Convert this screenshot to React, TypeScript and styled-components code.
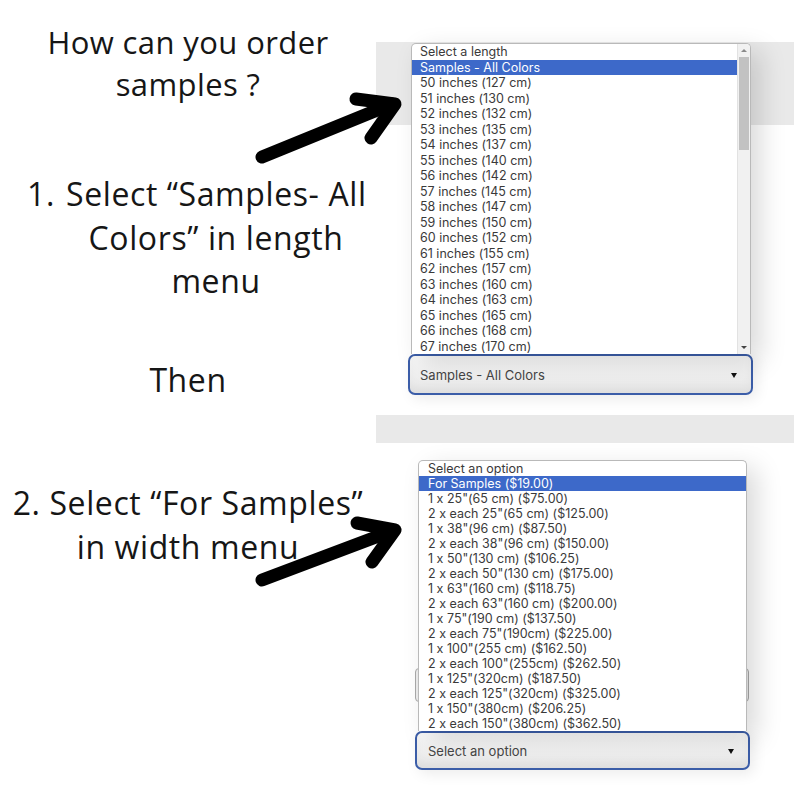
import styled, { createGlobalStyle } from "styled-components";

const GlobalStyle = createGlobalStyle`
  html, body {
    margin: 0;
    padding: 0;
    background: #ffffff;
  }
`;

const lengthOptions = [
  "Select a length",
  "Samples - All Colors",
  ...[127, 130, 132, 135, 137, 140, 142, 145, 147, 150, 152, 155, 157, 160, 163, 165, 168, 170].map(
    (cm, i) => `${50 + i} inches (${cm} cm)`
  ),
];

const widthOptions = [
  "Select an option",
  "For Samples ($19.00)",
  '1 x 25"(65 cm) ($75.00)',
  '2 x each 25"(65 cm) ($125.00)',
  '1 x 38"(96 cm) ($87.50)',
  '2 x each 38"(96 cm) ($150.00)',
  '1 x 50"(130 cm) ($106.25)',
  '2 x each 50"(130 cm) ($175.00)',
  '1 x 63"(160 cm) ($118.75)',
  '2 x each 63"(160 cm) ($200.00)',
  '1 x 75"(190 cm) ($137.50)',
  '2 x each 75"(190cm) ($225.00)',
  '1 x 100"(255 cm) ($162.50)',
  '2 x each 100"(255cm) ($262.50)',
  '1 x 125"(320cm) ($187.50)',
  '2 x each 125"(320cm) ($325.00)',
  '1 x 150"(380cm) ($206.25)',
  '2 x each 150"(380cm) ($362.50)',
];

export default function App() {
  return (
    <>
      <GlobalStyle />
      <Page>
        <Instructions>
          <Heading>
            How can you order
            <br />
            samples ?
          </Heading>

          {/* step 1 : marker + centred text block */}
          <StepOne>
            <Marker>1.</Marker>
            <StepText>
              Select “Samples- All
              <br />
              Colors” in length
              <br />
              menu
            </StepText>
          </StepOne>

          <Then>Then</Then>

          <StepTwo>
            2. Select “For Samples”
            <br />
            in width menu
          </StepTwo>
        </Instructions>

        <Shop>
          <Band $height={83} />
          <SelectWrap $top={229} $left={32} $width={345}>
            <ListBox $width={340}>
              <Options>
                {lengthOptions.map((o, i) => (
                  <Option key={o} $h={15.5} $active={i === 1}>
                    {o}
                  </Option>
                ))}
              </Options>
              <Scrollbar>
                <ScrollArrow $up />
                <Thumb />
                <Track />
                <ScrollArrow />
              </Scrollbar>
            </ListBox>
            <Select $height={41}>
              Samples - All Colors
              <Caret />
            </Select>
          </SelectWrap>

          <Band $height={28} $top={20} />

          <HiddenField />
          <SelectWrap $top={29} $left={39} $width={335}>
            <ListBox $width={329}>
              <Options>
                {widthOptions.map((o, i) => (
                  <Option key={o} $h={15} $active={i === 1} $pad={9}>
                    {o}
                  </Option>
                ))}
              </Options>
            </ListBox>
            <Select $height={39} $pad={11}>
              Select an option
              <Caret />
            </Select>
          </SelectWrap>
        </Shop>

        <Arrows viewBox="0 0 794 794">
          <path d="M262 157 L392 104" />
          <path d="M356 99 L395 104 L371 138" />
          <path d="M262 580 L392 531" />
          <path d="M357 523 L395 530 L372 562" />
        </Arrows>
      </Page>
    </>
  );
}

const Page = styled.div`
  position: relative;
  width: 794px;
  height: 794px;
  overflow: hidden;
  display: grid;
  grid-template-columns: 376px 1fr;
  background: #fff;
`;

const Instructions = styled.div`
  display: flex;
  flex-direction: column;
  font-family: "Open Sans", "Liberation Sans", sans-serif;
  font-size: 32px;
  letter-spacing: 0.6px;
  color: #161616;
  text-align: center;
`;

const Heading = styled.div`
  margin-top: 21px;
  font-size: 31px;
  letter-spacing: 0.4px;
  line-height: 42px;
`;

const StepOne = styled.div`
  display: flex;
  margin-top: 67px;
  line-height: 43.5px;
`;

const Marker = styled.span`
  width: 66px;
  padding-left: 27px;
  box-sizing: border-box;
  text-align: left;
`;

const StepText = styled.div`
  width: 300px;
  text-align: center;
  white-space: nowrap;
`;

const Then = styled.div`
  margin-top: 55px;
  line-height: 43.5px;
`;

const StepTwo = styled.div`
  margin-top: 80px;
  line-height: 44px;
  white-space: nowrap;
`;

const Shop = styled.div`
  display: flex;
  flex-direction: column;
  padding-top: 42px;
  font-family: Inter, "Liberation Sans", sans-serif;
  font-feature-settings: "calt" 0;
`;

const Band = styled.div<{ $height: number; $top?: number }>`
  height: ${(p) => p.$height}px;
  margin-top: ${(p) => p.$top ?? 0}px;
  background: #e9e9e9;
`;

const SelectWrap = styled.div<{ $top: number; $left: number; $width: number }>`
  position: relative;
  margin-top: ${(p) => p.$top}px;
  margin-left: ${(p) => p.$left}px;
  width: ${(p) => p.$width}px;
`;

const ListBox = styled.div<{ $width: number }>`
  position: absolute;
  bottom: 100%;
  left: 3px;
  width: ${(p) => p.$width}px;
  display: flex;
  box-sizing: border-box;
  background: #fff;
  border: 1px solid #b9b9b9;
  border-bottom: none;
  border-radius: 5px 5px 0 0;
  box-shadow: 10px 8px 26px rgba(0, 0, 0, 0.15);
  overflow: hidden;
  z-index: 2;
`;

const Options = styled.div`
  flex: 1;
  display: flex;
  flex-direction: column;
`;

const Option = styled.div<{ $h: number; $active?: boolean; $pad?: number }>`
  height: ${(p) => p.$h}px;
  line-height: ${(p) => p.$h}px;
  padding-left: ${(p) => p.$pad ?? 8}px;
  font-size: 12.5px;
  white-space: nowrap;
  color: ${(p) => (p.$active ? "#ffffff" : "#3a3a3a")};
  background: ${(p) => (p.$active ? "#3d69c9" : "transparent")};
`;

const Scrollbar = styled.div`
  width: 12px;
  display: flex;
  flex-direction: column;
  background: #f1f1f1;
  border-left: 1px solid #e2e2e2;
`;

const ScrollArrow = styled.div<{ $up?: boolean }>`
  height: 13px;
  display: flex;
  align-items: center;
  justify-content: center;

  &::before {
    content: "";
    border-left: 3px solid transparent;
    border-right: 3px solid transparent;
    ${(p) =>
      p.$up ? "border-bottom: 3px solid #8a8a8a;" : "border-top: 3px solid #444;"}
  }
`;

const Thumb = styled.div`
  height: 93px;
  margin: 0 1px;
  background: #c2c2c2;
`;

const Track = styled.div`
  flex: 1;
`;

const Select = styled.div<{ $height: number; $pad?: number }>`
  position: relative;
  height: ${(p) => p.$height}px;
  box-sizing: border-box;
  display: flex;
  align-items: center;
  padding-left: ${(p) => p.$pad ?? 10}px;
  border: 2px solid #3b5da8;
  border-radius: 7px;
  background: linear-gradient(#fafafa, #e7e7e7);
  box-shadow: inset 0 -6px 10px rgba(0, 0, 0, 0.04), 4px 4px 14px rgba(0, 0, 0, 0.08);
  font-size: 13px;
  color: #454545;
`;

const Caret = styled.span`
  position: absolute;
  right: 14px;
  top: 50%;
  margin-top: -2px;
  border-left: 3.5px solid transparent;
  border-right: 3.5px solid transparent;
  border-top: 5px solid #111;
`;

const HiddenField = styled.div`
  margin-top: 225px;
  margin-left: 39px;
  width: 334px;
  height: 34px;
  box-sizing: border-box;
  border: 1px solid #aaa;
  border-radius: 4px;
  background: #eeeeee;
`;

const Arrows = styled.svg`
  position: absolute;
  inset: 0;
  width: 794px;
  height: 794px;
  pointer-events: none;
  fill: none;
  stroke: #000;
  stroke-width: 13;
  stroke-linecap: round;
  stroke-linejoin: round;
`;
